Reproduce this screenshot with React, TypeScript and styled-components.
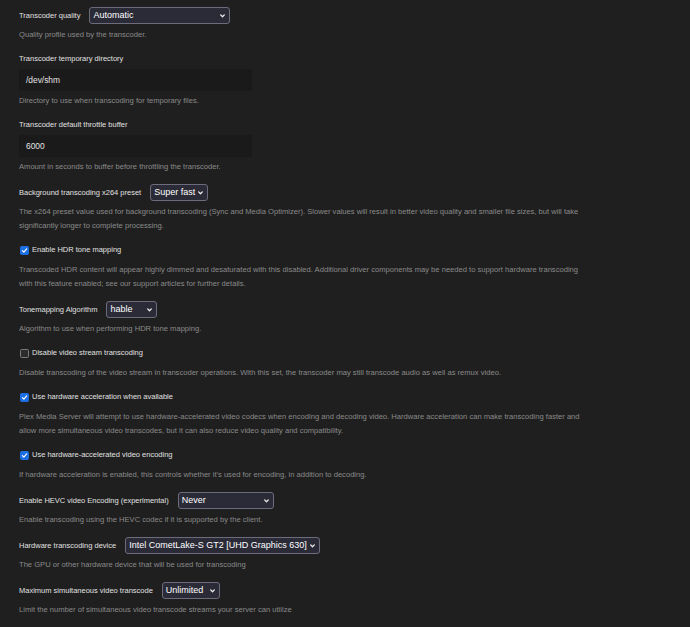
import React from "react";
import styled, { createGlobalStyle } from "styled-components";

const GlobalStyle = createGlobalStyle`
  html, body {
    margin: 0;
    padding: 0;
    background: #1f1f1f;
  }
  body {
    font-family: "Liberation Sans", Arial, sans-serif;
  }
`;

type SelectSetting = {
  kind: "select";
  label: string;
  value: string;
  width: number;
  desc: string;
};

type InputSetting = {
  kind: "input";
  label: string;
  value: string;
  desc: string;
};

type CheckSetting = {
  kind: "check";
  label: string;
  checked: boolean;
  desc: string;
};

type Setting = SelectSetting | InputSetting | CheckSetting;

const settings: Setting[] = [
  {
    kind: "select",
    label: "Transcoder quality",
    value: "Automatic",
    width: 141,
    desc: "Quality profile used by the transcoder.",
  },
  {
    kind: "input",
    label: "Transcoder temporary directory",
    value: "/dev/shm",
    desc: "Directory to use when transcoding for temporary files.",
  },
  {
    kind: "input",
    label: "Transcoder default throttle buffer",
    value: "6000",
    desc: "Amount in seconds to buffer before throttling the transcoder.",
  },
  {
    kind: "select",
    label: "Background transcoding x264 preset",
    value: "Super fast",
    width: 58,
    desc: "The x264 preset value used for background transcoding (Sync and Media Optimizer). Slower values will result in better video quality and smaller file sizes, but will take significantly longer to complete processing.",
  },
  {
    kind: "check",
    label: "Enable HDR tone mapping",
    checked: true,
    desc: "Transcoded HDR content will appear highly dimmed and desaturated with this disabled. Additional driver components may be needed to support hardware transcoding with this feature enabled; see our support articles for further details.",
  },
  {
    kind: "select",
    label: "Tonemapping Algorithm",
    value: "hable",
    width: 51,
    desc: "Algorithm to use when performing HDR tone mapping.",
  },
  {
    kind: "check",
    label: "Disable video stream transcoding",
    checked: false,
    desc: "Disable transcoding of the video stream in transcoder operations. With this set, the transcoder may still transcode audio as well as remux video.",
  },
  {
    kind: "check",
    label: "Use hardware acceleration when available",
    checked: true,
    desc: "Plex Media Server will attempt to use hardware-accelerated video codecs when encoding and decoding video. Hardware acceleration can make transcoding faster and allow more simultaneous video transcodes, but it can also reduce video quality and compatibility.",
  },
  {
    kind: "check",
    label: "Use hardware-accelerated video encoding",
    checked: true,
    desc: "If hardware acceleration is enabled, this controls whether it's used for encoding, in addition to decoding.",
  },
  {
    kind: "select",
    label: "Enable HEVC video Encoding (experimental)",
    value: "Never",
    width: 96,
    desc: "Enable transcoding using the HEVC codec if it is supported by the client.",
  },
  {
    kind: "select",
    label: "Hardware transcoding device",
    value: "Intel CometLake-S GT2 [UHD Graphics 630]",
    width: 195,
    desc: "The GPU or other hardware device that will be used for transcoding",
  },
  {
    kind: "select",
    label: "Maximum simultaneous video transcode",
    value: "Unlimited",
    width: 58,
    desc: "Limit the number of simultaneous video transcode streams your server can utilize",
  },
];

const Chevron = () => (
  <ChevronIcon width="5" height="4" viewBox="0 0 5 4">
    <polyline
      points="0.7,0.9 2.5,2.8 4.3,0.9"
      fill="none"
      stroke="#ececec"
      strokeWidth="1.3"
      strokeLinecap="round"
      strokeLinejoin="round"
    />
  </ChevronIcon>
);

const Tick = () => (
  <svg width="9" height="9" viewBox="0 0 9 9">
    <polyline
      points="1.8,4.6 3.7,6.5 7.3,2.4"
      fill="none"
      stroke="#ffffff"
      strokeWidth="1.5"
      strokeLinecap="round"
      strokeLinejoin="round"
    />
  </svg>
);

const App = () => {
  return (
    <>
      <GlobalStyle />
      <Page>
        {settings.map((s) => (
          <Block key={s.label}>
            {s.kind === "select" && (
              <>
                <SelectRow>
                  <Label>{s.label}</Label>
                  <Select $width={s.width}>
                    <SelectValue>{s.value}</SelectValue>
                    <Chevron />
                  </Select>
                </SelectRow>
                <Desc $gap={4}>{s.desc}</Desc>
              </>
            )}
            {s.kind === "input" && (
              <>
                <Label>{s.label}</Label>
                <TextBox>{s.value}</TextBox>
                <Desc $gap={3}>{s.desc}</Desc>
              </>
            )}
            {s.kind === "check" && (
              <>
                <CheckRow>
                  <Box $checked={s.checked}>{s.checked && <Tick />}</Box>
                  <Label>{s.label}</Label>
                </CheckRow>
                <Desc $gap={6}>{s.desc}</Desc>
              </>
            )}
          </Block>
        ))}
      </Page>
    </>
  );
};

export default App;

const Page = styled.div`
  padding: 7px 0 0 19px;
  max-width: 568px;
  height: 620px;
`;

const Block = styled.section`
  margin-bottom: 10px;
`;

const Label = styled.div`
  font-size: 7.5px;
  line-height: 14px;
  color: #e0e0e0;
  white-space: nowrap;
`;

const SelectRow = styled.div`
  display: flex;
  align-items: center;
  gap: 9px;
  height: 17px;
`;

const Select = styled.div<{ $width: number }>`
  box-sizing: border-box;
  min-width: ${(p) => p.$width}px;
  height: 17px;
  display: flex;
  align-items: center;
  justify-content: space-between;
  gap: 3px;
  padding: 0 4px 0 3px;
  background: #2b2b38;
  border: 1px solid #6c6c7c;
  border-radius: 3px;
`;

const SelectValue = styled.span`
  font-size: 9px;
  line-height: 15px;
  color: #ffffff;
  white-space: nowrap;
`;

const ChevronIcon = styled.svg`
  flex-shrink: 0;
`;

const TextBox = styled.div`
  box-sizing: border-box;
  width: 233px;
  height: 22px;
  margin-top: 3px;
  padding-left: 7px;
  display: flex;
  align-items: center;
  background: #1a1a1a;
  font-size: 8.4px;
  color: #e4e4e4;
`;

const CheckRow = styled.div`
  display: flex;
  align-items: center;
  gap: 3px;
  height: 14px;
`;

const Box = styled.span<{ $checked: boolean }>`
  box-sizing: border-box;
  width: 9px;
  height: 9px;
  margin-left: 1px;
  display: flex;
  align-items: center;
  justify-content: center;
  border-radius: 1.5px;
  background: ${(p) => (p.$checked ? "#1c6fe3" : "#2c2c2c")};
  border: 1px solid ${(p) => (p.$checked ? "#1c6fe3" : "#7a7a7a")};
`;

const Desc = styled.p<{ $gap: number }>`
  margin: ${(p) => p.$gap}px 0 0;
  font-size: 7.6px;
  line-height: 14px;
  color: #8a8a8a;
`;
